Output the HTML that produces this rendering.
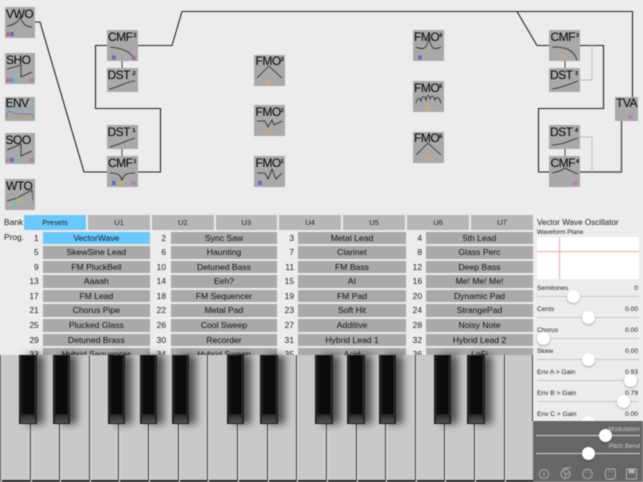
<!DOCTYPE html>
<html><head><meta charset="utf-8"><style>
html,body{margin:0;padding:0;width:643px;height:482px;overflow:hidden;background:#ececec;font-family:"Liberation Sans",sans-serif}
#m{position:absolute;left:0;top:0;width:643px;height:482px;overflow:hidden;background:#ececec;filter:blur(.4px)}
svg{position:absolute;left:0;top:0}
.a{position:absolute}
.t,.p,.n,.l,.v{position:absolute;white-space:nowrap}
.t{top:215px;height:14.5px;line-height:15px;background:#b6b6b6;text-align:center;font-size:7.5px;color:#222}
.p{height:12.6px;line-height:13px;background:#a9a9a9;text-align:center;font-size:8.6px;color:#111;overflow:hidden}
.n{width:26px;height:13px;line-height:13px;text-align:right;font-size:8.4px;color:#222}
.c1{left:42.7px;width:107.3px}.c2{left:170.7px;width:106.6px}.c3{left:298.3px;width:107.4px}.c4{left:426px;width:107px}
.d1{left:12.7px}.d2{left:140px}.d3{left:268px}.d4{left:396px}
.r1{top:231.7px}.r2{top:246.2px}.r3{top:260.7px}.r4{top:275.3px}.r5{top:289.8px}.r6{top:304.4px}.r7{top:319px}.r8{top:333.5px}.r9{top:348px}
.l{left:537px;font-size:6.6px;color:#222;line-height:8px}
.v{right:5px;font-size:6.6px;color:#222;line-height:8px}
.k{position:absolute;top:355px;height:69px;width:17.6px;background:linear-gradient(90deg,#333,#0c0c0c 14%,#0a0a0a 86%,#3a3a3a);box-shadow:7px 0 8px rgba(0,0,0,.6);box-sizing:border-box;border:1px solid #1a1a1a}
.k:after{content:"";position:absolute;left:1px;right:1px;bottom:0;height:9px;background:linear-gradient(#222,#555)}
.w{position:absolute;top:355px;height:127px;width:1px;background:#3a3a3a;box-shadow:1px 0 0 #e2e2e2}
.s{position:absolute;width:13px;height:13px;border-radius:50%;background:#fff;box-shadow:0 1px 2px rgba(0,0,0,.3)}
.tr{position:absolute;left:537px;width:102px;height:1px;background:#c4c4c4}
</style></head><body><div id="m">
<svg width="643" height="215" viewBox="0 0 643 215" font-family="Liberation Sans, sans-serif">
<g fill="none" stroke="#e6e6e6" stroke-width=".6" stroke-dasharray="1 1">
<path d="M40 22H632M138 45H549M35 68H107M145 172H549M35 194H620M160 205H540M175 68L210 205M210 45L172 172M345 45L210 205"/>
<path d="M220 70H254V172M243 95H297V145H254M285 70L296 78V145M395 70V103H455M380 97H455M380 122H455V45M382 146H477V45H444M355 146V45H413M400 45V132M423 70H455M490 45L536 172M538 45L490 172M600 45H620V205H340"/>
</g>
<g fill="none" stroke="#222" stroke-width="1.100">
<path d="M35 22H40L84 172H107"/>
<path d="M107 45.500H95.500V108.500H160.500V172H138"/>
<path d="M138 45.500H172L182 11.500H632.500V97"/>
<path d="M517 11.500L537 45.500H549"/>
<path d="M580 45.500H603.500V108.500H538.500V172H549"/>
<path d="M122 61V68M122 149V156M565 61V68M565 149V156" stroke="#555"/>
</g>
<path d="M580 172H621.500V121" fill="none" stroke="#555" stroke-width="1.400"/>
<path d="M592 45.500V80H580M580 137H592V172" fill="none" stroke="#bdbdbd" stroke-width="1"/>
<g fill="#a9a9a9">
<rect x="5" y="7" width="30" height="31"/><rect x="5" y="53" width="30" height="31"/><rect x="5" y="97" width="30" height="24"/><rect x="5" y="133" width="30" height="31"/><rect x="5" y="179" width="30" height="31"/>
<rect x="107" y="30" width="31" height="31"/><rect x="107" y="68" width="31" height="24"/><rect x="107" y="125" width="31" height="24"/><rect x="107" y="156" width="31" height="31"/>
<rect x="254" y="55" width="31" height="31"/><rect x="254" y="105" width="31" height="31"/><rect x="254" y="156" width="31" height="31"/>
<rect x="413" y="30" width="31" height="31"/><rect x="413" y="81" width="31" height="31"/><rect x="413" y="132" width="31" height="31"/>
<rect x="549" y="30" width="31" height="31"/><rect x="549" y="68" width="31" height="24"/><rect x="549" y="125" width="31" height="24"/><rect x="549" y="156" width="31" height="31"/>
<rect x="615" y="97" width="23" height="24"/>
</g>
<g fill="none" stroke="#222" stroke-width=".8">
<path d="M7 26C13 25 18 23 20 17C23 25 27 27 32 27"/>
<path d="M7 69L21 65V77L32 72"/>
<path d="M7 150L21 144V156L32 151"/>
<path d="M7 201L17 198L32 190L33 200"/>
<path d="M110 47C121 48 131 51 135 60"/>
<path d="M109 89C119 88 123 82 135 81"/>
<path d="M110 147C120 144 126 141 135 138"/>
<path d="M110 173C117 173 120 174 122 180C124 174 127 173 135 173"/>
<path d="M257 78L269 66L282 78"/>
<path d="M257 121H265L268 127L272 120L274 125L282 121"/>
<path d="M257 173H265L268 179L272 169L276 179L282 173"/>
<path d="M416 47C423 50 427 50 429 37C431 50 435 50 441 47"/>
<path d="M416 103C418 97 420 97 421 101C423 95 424 95 426 100C427 94 429 94 430 99C432 95 433 95 435 100C436 97 439 96 441 103"/>
<path d="M416 155L428 143L441 155"/>
<path d="M552 47C563 47 573 48 577 60"/>
<path d="M552 89C560 88 568 85 578 81"/>
<path d="M552 145C562 145 568 141 578 138"/>
<path d="M552 173C558 172 562 170 565 168C569 170 572 172 578 174"/>
</g>
<path d="M7 199C10 192 12 192 15 197S22 190 28 190 32 199 33 203" fill="none" stroke="#888" stroke-width=".5"/>
<path d="M6 117L8 108H32L34 117Z" fill="none" stroke="#5fb8b8" stroke-width=".7"/>
<path d="M6 117L9 111L16 114H31L34 117" fill="none" stroke="#7a5fb8" stroke-width=".7"/>
<path d="M6 117H34" fill="none" stroke="#b89a5f" stroke-width=".7"/>
<g fill="#000" font-size="12" letter-spacing="-.5">
<text x="6" y="18">VWO</text><text x="6" y="64">SHO</text><text x="5.500" y="107">ENV</text><text x="5.500" y="144">SOO</text><text x="6" y="190">WTO</text>
<text x="108" y="41">CMF<tspan font-size="5.500" font-weight="bold" dy="-4" dx="1">2</tspan></text>
<text x="107.500" y="79">DST<tspan font-size="5.500" font-weight="bold" dy="-4" dx="2.500">2</tspan></text>
<text x="107.500" y="136">DST<tspan font-size="5.500" font-weight="bold" dy="-4" dx="2.500">1</tspan></text>
<text x="108" y="167">CMF<tspan font-size="5.500" font-weight="bold" dy="-4" dx="1">1</tspan></text>
<text x="255.500" y="65">FMO<tspan font-size="5.500" font-weight="bold" dy="-4">3</tspan></text>
<text x="255.500" y="116">FMO<tspan font-size="5.500" font-weight="bold" dy="-4">2</tspan></text>
<text x="255.500" y="167">FMO<tspan font-size="5.500" font-weight="bold" dy="-4">1</tspan></text>
<text x="414" y="41">FMO<tspan font-size="5.500" font-weight="bold" dy="-4">4</tspan></text>
<text x="414" y="92">FMO<tspan font-size="5.500" font-weight="bold" dy="-4">5</tspan></text>
<text x="414" y="142">FMO<tspan font-size="5.500" font-weight="bold" dy="-4">6</tspan></text>
<text x="550.500" y="41">CMF<tspan font-size="5.500" font-weight="bold" dy="-4" dx="1">3</tspan></text>
<text x="550" y="79">DST<tspan font-size="5.500" font-weight="bold" dy="-4" dx="2.500">3</tspan></text>
<text x="550" y="136">DST<tspan font-size="5.500" font-weight="bold" dy="-4" dx="2.500">4</tspan></text>
<text x="550.500" y="167">CMF<tspan font-size="5.500" font-weight="bold" dy="-4" dx="1">4</tspan></text>
<text x="616" y="107">TVA</text>
</g>
<g font-size="5.500" font-weight="bold">
<g fill="#d03030"><text x="6" y="36">A</text><text x="6" y="82">A</text></g>
<text x="6" y="162" fill="#c76a6a">A</text>
<g fill="#3b3bd0"><text x="10" y="36">B</text><text x="112" y="59.500">B</text><text x="112" y="185">B</text><text x="258" y="185">B</text><text x="418" y="59.500">B</text><text x="10" y="162">B</text></g>
<g fill="#6a6ad0"><text x="10" y="82">B</text></g>
<g fill="#46c8c8"><text x="13" y="82">C</text><text x="13" y="208">C</text></g>
<g fill="#e0b040"><text x="17" y="203">D</text><text x="120" y="185">D</text><text x="267" y="84">D</text><text x="267" y="134">D</text><text x="426" y="110">D</text><text x="426" y="161">D</text><text x="563" y="59.500">D</text></g>
<g fill="#c060c0"><text x="29" y="82">M</text><text x="29" y="162">M</text><text x="131" y="59.500">M</text><text x="131" y="185">M</text><text x="573" y="185">M</text><text x="628" y="119">M</text></g>
</g>
</svg>

<div class="a" style="left:4px;top:217px;font-size:8.4px;color:#222">Bank</div>
<div class="a" style="left:4px;top:232px;font-size:8.4px;color:#222">Prog.</div>
<div class="t" style="left:24px;width:62px;background:#6cc8fb;color:#123">Presets</div>
<div class="t" style="left:88px;width:62px">U1</div>
<div class="t" style="left:152px;width:61.500px">U2</div>
<div class="t" style="left:215.500px;width:61.500px">U3</div>
<div class="t" style="left:279px;width:62px">U4</div>
<div class="t" style="left:343px;width:62px">U5</div>
<div class="t" style="left:407px;width:62px">U6</div>
<div class="t" style="left:471px;width:62px">U7</div>

<div class="n d1 r1">1</div><div class="p c1 r1" style="background:#6cc8fb;color:#0c1c2c">VectorWave</div>
<div class="n d2 r1">2</div><div class="p c2 r1">Sync Saw</div>
<div class="n d3 r1">3</div><div class="p c3 r1">Metal Lead</div>
<div class="n d4 r1">4</div><div class="p c4 r1">5th Lead</div>
<div class="n d1 r2">5</div><div class="p c1 r2">SkewSine Lead</div>
<div class="n d2 r2">6</div><div class="p c2 r2">Haunting</div>
<div class="n d3 r2">7</div><div class="p c3 r2">Clarinet</div>
<div class="n d4 r2">8</div><div class="p c4 r2">Glass Perc</div>
<div class="n d1 r3">9</div><div class="p c1 r3">FM PluckBell</div>
<div class="n d2 r3">10</div><div class="p c2 r3">Detuned Bass</div>
<div class="n d3 r3">11</div><div class="p c3 r3">FM Bass</div>
<div class="n d4 r3">12</div><div class="p c4 r3">Deep Bass</div>
<div class="n d1 r4">13</div><div class="p c1 r4">Aaaah</div>
<div class="n d2 r4">14</div><div class="p c2 r4">Eeh?</div>
<div class="n d3 r4">15</div><div class="p c3 r4">AI</div>
<div class="n d4 r4">16</div><div class="p c4 r4">Me! Me! Me!</div>
<div class="n d1 r5">17</div><div class="p c1 r5">FM Lead</div>
<div class="n d2 r5">18</div><div class="p c2 r5">FM Sequencer</div>
<div class="n d3 r5">19</div><div class="p c3 r5">FM Pad</div>
<div class="n d4 r5">20</div><div class="p c4 r5">Dynamic Pad</div>
<div class="n d1 r6">21</div><div class="p c1 r6">Chorus Pipe</div>
<div class="n d2 r6">22</div><div class="p c2 r6">Metal Pad</div>
<div class="n d3 r6">23</div><div class="p c3 r6">Soft Hit</div>
<div class="n d4 r6">24</div><div class="p c4 r6">StrangePad</div>
<div class="n d1 r7">25</div><div class="p c1 r7">Plucked Glass</div>
<div class="n d2 r7">26</div><div class="p c2 r7">Cool Sweep</div>
<div class="n d3 r7">27</div><div class="p c3 r7">Additive</div>
<div class="n d4 r7">28</div><div class="p c4 r7">Noisy Note</div>
<div class="n d1 r8">29</div><div class="p c1 r8">Detuned Brass</div>
<div class="n d2 r8">30</div><div class="p c2 r8">Recorder</div>
<div class="n d3 r8">31</div><div class="p c3 r8">Hybrid Lead 1</div>
<div class="n d4 r8">32</div><div class="p c4 r8">Hybrid Lead 2</div>
<div class="n d1 r9">33</div><div class="p c1 r9">Hybrid Sequencer</div>
<div class="n d2 r9">34</div><div class="p c2 r9">Hybrid Sweep</div>
<div class="n d3 r9">35</div><div class="p c3 r9">Acid</div>
<div class="n d4 r9">36</div><div class="p c4 r9">LoFi</div>

<div class="a" style="left:0;top:355px;width:533px;height:127px;background:#c9c9c9;overflow:hidden">
<div class="a" style="left:0;bottom:0;width:533px;height:2px;background:#222"></div>
</div>
<div class="w" style="left:0"></div><div class="w" style="left:29.500px;top:424px;height:58px"></div><div class="w" style="left:59px;top:424px;height:58px"></div><div class="w" style="left:88.500px"></div><div class="w" style="left:118px;top:424px;height:58px"></div><div class="w" style="left:148px;top:424px;height:58px"></div><div class="w" style="left:177.500px;top:424px;height:58px"></div><div class="w" style="left:207px"></div><div class="w" style="left:237px;top:424px;height:58px"></div><div class="w" style="left:266.500px;top:424px;height:58px"></div><div class="w" style="left:296px"></div><div class="w" style="left:325.500px;top:424px;height:58px"></div><div class="w" style="left:355.500px;top:424px;height:58px"></div><div class="w" style="left:385px;top:424px;height:58px"></div><div class="w" style="left:414.500px"></div><div class="w" style="left:444px;top:424px;height:58px"></div><div class="w" style="left:473.500px;top:424px;height:58px"></div><div class="w" style="left:503.500px"></div>
<div class="k" style="left:19px"></div><div class="k" style="left:52.700px"></div><div class="k" style="left:107.700px"></div><div class="k" style="left:139.700px"></div><div class="k" style="left:171.500px"></div><div class="k" style="left:226.500px"></div><div class="k" style="left:260px"></div><div class="k" style="left:315.300px"></div><div class="k" style="left:347.300px"></div><div class="k" style="left:378.500px"></div><div class="k" style="left:433.500px"></div><div class="k" style="left:467.300px"></div>

<div class="a" style="left:533px;top:210px;width:110px;height:211px;background:#ececec;overflow:hidden"></div>
<div class="a" style="left:532px;top:355px;width:1px;height:66px;background:#444"></div>
<div class="a" style="left:537px;top:218px;font-size:8.100px;color:#222;white-space:nowrap">Vector Wave Oscillator</div>
<div class="l" style="top:228.500px;font-size:6.300px">Waveform Plane</div>
<div class="a" style="left:537px;top:237px;width:102px;height:42px;background:#fff"></div>
<div class="a" style="left:537px;top:251px;width:102px;height:1px;background:#f0a8a8"></div>
<div class="a" style="left:559px;top:237px;width:1px;height:42px;background:#f0a8a8"></div>

<div class="l" style="top:284.500px">Semitones</div><div class="v" style="top:284.500px">0</div>
<div class="tr" style="top:296px"></div><div class="s" style="left:566.500px;top:290px"></div>
<div class="l" style="top:306px">Cents</div><div class="v" style="top:306px">0.00</div>
<div class="tr" style="top:317px"></div><div class="s" style="left:581.500px;top:311px"></div>
<div class="l" style="top:327px">Chorus</div><div class="v" style="top:327px">0.00</div>
<div class="tr" style="top:338px"></div><div class="s" style="left:536.500px;top:332px"></div>
<div class="l" style="top:348px">Skew</div><div class="v" style="top:348px">0.00</div>
<div class="tr" style="top:359px"></div><div class="s" style="left:581.500px;top:353px"></div>
<div class="l" style="top:369px">Env A &gt; Gain</div><div class="v" style="top:369px">0.93</div>
<div class="tr" style="top:380px"></div><div class="s" style="left:623.500px;top:374px"></div>
<div class="l" style="top:390px">Env B &gt; Gain</div><div class="v" style="top:390px">0.79</div>
<div class="tr" style="top:401px"></div><div class="s" style="left:616.500px;top:395px"></div>
<div class="l" style="top:411px">Env C &gt; Gain</div><div class="v" style="top:411px">0.00</div>
<div class="a" style="left:581.500px;top:416px;width:13px;height:5px;overflow:hidden"><div style="width:13px;height:13px;border-radius:50%;background:#fff"></div></div>

<div class="a" style="left:533px;top:421px;width:110px;height:61px;background:#666"></div>
<div class="a" style="right:3px;top:426px;font-size:6.500px;color:#c8c8c8">Modulation</div>
<div class="a" style="left:536px;top:435px;width:104px;height:1px;background:#d0d0d0"></div>
<div class="s" style="left:598.500px;top:429px"></div>
<div class="a" style="right:3px;top:443px;font-size:6.500px;color:#c8c8c8">Pitch Bend</div>
<div class="a" style="left:536px;top:453px;width:104px;height:1px;background:#d0d0d0"></div>
<div class="s" style="left:581.500px;top:446.500px"></div>
<svg style="left:533px;top:455px" width="110" height="27" viewBox="0 0 110 27" fill="none" stroke="#b4b4b4" stroke-width=".9">
<circle cx="11" cy="19" r="4.600"/><path d="M11 17V21M11 15.800V16.400"/>
<circle cx="32.500" cy="19" r="4.600"/><path d="M30 13.500L38 12.500M32.500 19L30 16M32.500 19L36 18.500M32.500 19V23"/>
<circle cx="54.500" cy="19" r="4.800"/><path d="M52 17.500h.8M54 16.500h.8M56.500 17.500h.8"/>
<rect x="72.500" y="14" width="10" height="10" rx="2"/><path d="M75 21h1M79 17h1M79.500 21h1M76 16.500h1"/>
<rect x="93.500" y="14" width="10" height="10"/><rect x="96" y="14" width="5" height="4" fill="#b4b4b4"/>
</svg>
</div></body></html>
